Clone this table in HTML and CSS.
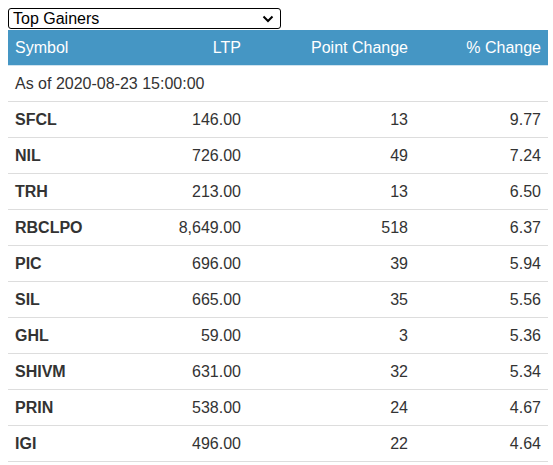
FILE: index.html
```html
<!DOCTYPE html>
<html>
<head>
<meta charset="utf-8">
<link rel="stylesheet" href="styles.css">
</head>
<body>
<div class="picker">
  <select class="picker-select">
    <option>Top Gainers</option>
    <option>Top Losers</option>
  </select>
  <svg class="picker-arrow" width="12" height="8" viewBox="0 0 12 8"><path d="M1.5 1.5 L6 6 L10.5 1.5" fill="none" stroke="#000" stroke-width="2"/></svg>
</div>
<table class="movers">
  <colgroup>
    <col class="c1"><col class="c2"><col class="c3"><col class="c4">
  </colgroup>
  <thead>
    <tr><th class="left">Symbol</th><th>LTP</th><th>Point Change</th><th>% Change</th></tr>
  </thead>
  <tbody>
    <tr><td class="left asof" colspan="4">As of 2020-08-23 15:00:00</td></tr>
    <tr><td class="sym">SFCL</td><td>146.00</td><td>13</td><td>9.77</td></tr>
    <tr><td class="sym">NIL</td><td>726.00</td><td>49</td><td>7.24</td></tr>
    <tr><td class="sym">TRH</td><td>213.00</td><td>13</td><td>6.50</td></tr>
    <tr><td class="sym">RBCLPO</td><td>8,649.00</td><td>518</td><td>6.37</td></tr>
    <tr><td class="sym">PIC</td><td>696.00</td><td>39</td><td>5.94</td></tr>
    <tr><td class="sym">SIL</td><td>665.00</td><td>35</td><td>5.56</td></tr>
    <tr><td class="sym">GHL</td><td>59.00</td><td>3</td><td>5.36</td></tr>
    <tr><td class="sym">SHIVM</td><td>631.00</td><td>32</td><td>5.34</td></tr>
    <tr><td class="sym">PRIN</td><td>538.00</td><td>24</td><td>4.67</td></tr>
    <tr><td class="sym">IGI</td><td>496.00</td><td>22</td><td>4.64</td></tr>
  </tbody>
</table>
</body>
</html>
```
FILE: styles.css
```css
html, body {
  margin: 0;
  background: #fff;
}
body {
  padding: 8px;
  font-family: "Liberation Sans", Arial, sans-serif;
  font-size: 16px;
  color: #333;
}
.picker {
  position: relative;
  width: 273px;
  height: 21px;
  margin-bottom: 1px;
}
.picker-select {
  appearance: none;
  -webkit-appearance: none;
  display: block;
  box-sizing: border-box;
  width: 100%;
  height: 21px;
  margin: 0;
  padding: 0 0 0 4px;
  border: 1px solid #000;
  border-radius: 3px;
  background: #fff;
  font-family: "Liberation Sans", Arial, sans-serif;
  font-size: 16px;
  line-height: 19px;
  color: #000;
}
.picker-arrow {
  position: absolute;
  right: 7px;
  top: 7px;
  pointer-events: none;
}
.movers {
  width: 540px;
  border-collapse: collapse;
  table-layout: fixed;
}
.c1 { width: 122px; }
.c2 { width: 118px; }
.c3 { width: 167px; }
.c4 { width: 133px; }
.movers th {
  background: #4596c4;
  color: #fff;
  font-weight: normal;
  text-align: right;
  height: 35px;
  padding: 0 7px;
  border-bottom: 1px solid #cfe3ef;
}
.movers td {
  height: 35px;
  padding: 0 7px;
  text-align: right;
  border-bottom: 1px solid #ddd;
}
.movers .left { text-align: left; }
.movers .sym {
  text-align: left;
  font-weight: bold;
}
```
